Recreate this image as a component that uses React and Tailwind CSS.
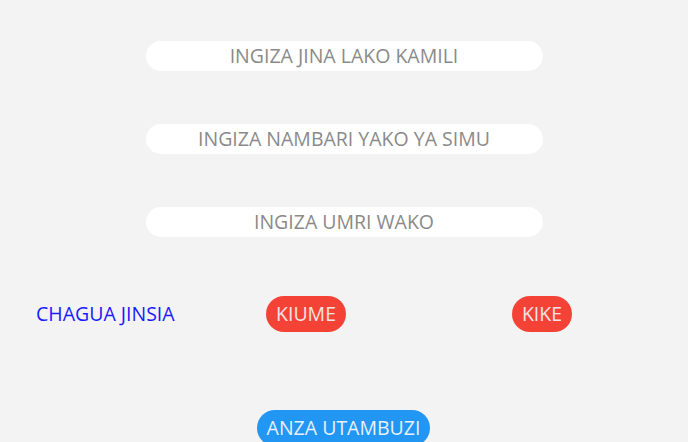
export default function App() {
  const font = { fontFamily: '"Open Sans", sans-serif' };
  return (
    <div className="w-[688px] h-[442px] overflow-hidden bg-[#f3f3f3]" style={font}>
      <div className="flex flex-col items-center pt-[41px]">
        <div className="w-[397px] h-[30px] rounded-full bg-white flex items-center justify-center text-[19.5px] text-[#8a8a8a]">
          INGIZA JINA LAKO KAMILI
        </div>
        <div className="mt-[53px] w-[397px] h-[30px] rounded-full bg-white flex items-center justify-center text-[19.5px] text-[#8a8a8a]">
          INGIZA NAMBARI YAKO YA SIMU
        </div>
        <div className="mt-[53px] w-[397px] h-[30px] rounded-full bg-white flex items-center justify-center text-[19.5px] text-[#8a8a8a]">
          INGIZA UMRI WAKO
        </div>
      </div>
      <div className="mt-[59px] h-[36px] flex items-center">
        <div className="ml-[36px] w-[230px] text-[19.5px] text-[#1a1aff]">CHAGUA JINSIA</div>
        <div className="w-[80px] h-[36px] rounded-full bg-[#f44336] text-[#f3e3e3] text-[19.5px] flex items-center justify-center">
          KIUME
        </div>
        <div className="ml-[166px] w-[60px] h-[36px] rounded-full bg-[#f44336] text-[#f3e3e3] text-[19.5px] flex items-center justify-center">
          KIKE
        </div>
      </div>
      <div className="mt-[78px] flex">
        <div className="ml-[257px] w-[173px] h-[36px] rounded-full bg-[#2196f3] text-[#e8f0fa] text-[19.5px] flex items-center justify-center">
          ANZA UTAMBUZI
        </div>
      </div>
    </div>
  );
}
